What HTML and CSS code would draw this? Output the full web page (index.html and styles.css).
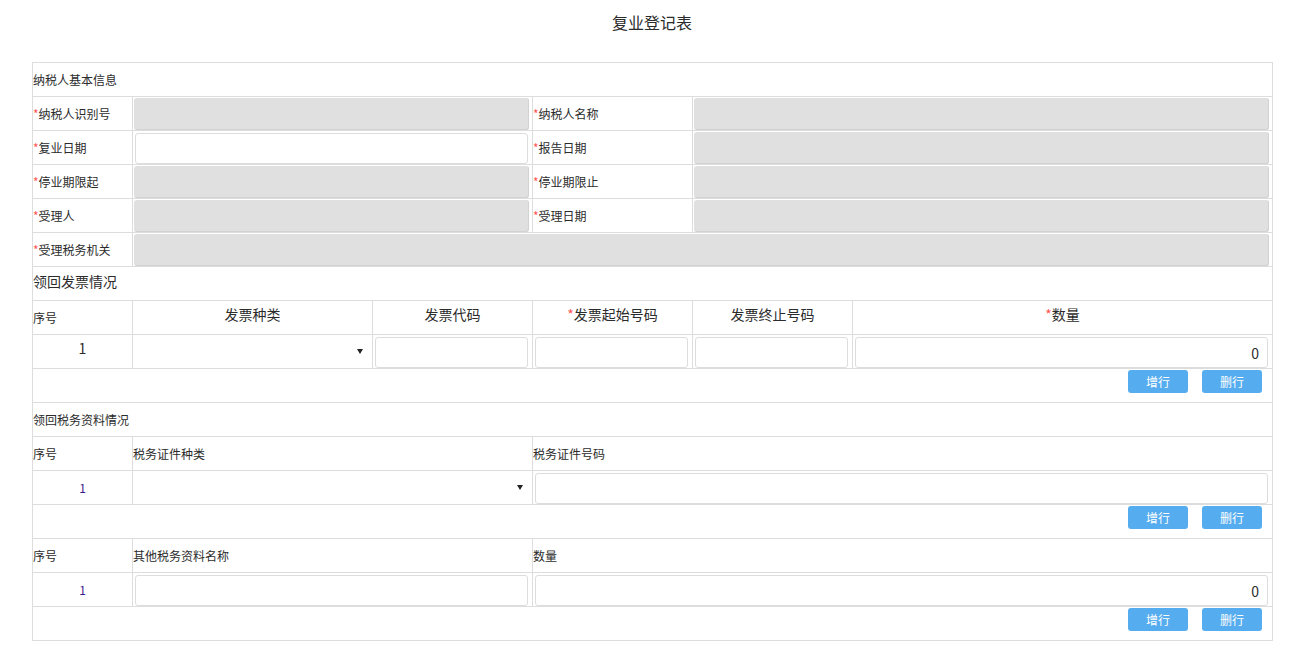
FILE: index.html
```html
<!DOCTYPE html>
<html lang="zh-CN">
<head>
  <meta charset="UTF-8">
  <title>复业登记表</title>
  <link rel="stylesheet" href="styles.css">
</head>
<body>

  <h2 class="title">复业登记表</h2>

  <div class="form">
    <!-- 纳税人基本信息 -->
    <table class="grid">
      <colgroup><col style="width:100px"><col style="width:400px"><col style="width:160px"><col></colgroup>
      <tr><td colspan="4" class="section">纳税人基本信息</td></tr>
      <tr>
        <td><span class="req">*</span>纳税人识别号</td>
        <td><input class="ro" disabled></td>
        <td><span class="req">*</span>纳税人名称</td>
        <td><input class="ro" disabled></td>
      </tr>
      <tr>
        <td><span class="req">*</span>复业日期</td>
        <td><input class="txt"></td>
        <td><span class="req">*</span>报告日期</td>
        <td><input class="ro" disabled></td>
      </tr>
      <tr>
        <td><span class="req">*</span>停业期限起</td>
        <td><input class="ro" disabled></td>
        <td><span class="req">*</span>停业期限止</td>
        <td><input class="ro" disabled></td>
      </tr>
      <tr>
        <td><span class="req">*</span>受理人</td>
        <td><input class="ro" disabled></td>
        <td><span class="req">*</span>受理日期</td>
        <td><input class="ro" disabled></td>
      </tr>
      <tr>
        <td><span class="req">*</span>受理税务机关</td>
        <td colspan="3"><input class="ro" disabled></td>
      </tr>
    </table>

    <!-- 领回发票情况 -->
    <table class="grid">
      <colgroup><col style="width:100px"><col style="width:240px"><col style="width:160px"><col style="width:160px"><col style="width:160px"><col></colgroup>
      <tr><td colspan="6" class="section big">领回发票情况</td></tr>
      <tr class="head">
        <td class="seq-head">序号</td>
        <td>发票种类</td>
        <td>发票代码</td>
        <td><span class="req">*</span>发票起始号码</td>
        <td>发票终止号码</td>
        <td><span class="req">*</span>数量</td>
      </tr>
      <tr>
        <td class="seq big">1</td>
        <td><div class="select"><span class="arrow"></span></div></td>
        <td><input class="txt"></td>
        <td><input class="txt"></td>
        <td><input class="txt"></td>
        <td><input class="txt num" value="0"></td>
      </tr>
      <tr>
        <td colspan="6" class="actions">
          <button class="btn">增行</button><button class="btn">删行</button>
        </td>
      </tr>
    </table>

    <!-- 领回税务资料情况 -->
    <table class="grid">
      <colgroup><col style="width:100px"><col style="width:400px"><col></colgroup>
      <tr><td colspan="3" class="section">领回税务资料情况</td></tr>
      <tr>
        <td>序号</td>
        <td>税务证件种类</td>
        <td>税务证件号码</td>
      </tr>
      <tr>
        <td class="seq purple">1</td>
        <td><div class="select"><span class="arrow"></span></div></td>
        <td><input class="txt"></td>
      </tr>
      <tr>
        <td colspan="3" class="actions">
          <button class="btn">增行</button><button class="btn">删行</button>
        </td>
      </tr>
      <tr>
        <td>序号</td>
        <td>其他税务资料名称</td>
        <td>数量</td>
      </tr>
      <tr>
        <td class="seq purple">1</td>
        <td><input class="txt"></td>
        <td><input class="txt num" value="0"></td>
      </tr>
      <tr>
        <td colspan="3" class="actions">
          <button class="btn">增行</button><button class="btn">删行</button>
        </td>
      </tr>
    </table>
  </div>

</body>
</html>
```

FILE: styles.css
```css
body {
  margin: 0;
  font-family: "Noto Sans CJK SC", "Liberation Sans", sans-serif;
  font-size: 12px;
  color: #2b2b2b;
  background: #fff;
}
.title {
  margin: 0;
  padding-top: 12px;
  height: 62px;
  box-sizing: border-box;
  text-align: center;
  font-size: 16px;
  font-weight: normal;
  line-height: 20px;
}
.form {
  width: 1241px;
  margin-left: 32px;
}
.grid {
  width: 1241px;
  border-collapse: collapse;
  table-layout: fixed;
}
.grid + .grid {
  margin-top: -1px;
}
.grid td {
  border: 1px solid #ddd;
  height: 33px;
  padding: 0;
  line-height: 16px;
  vertical-align: middle;
  white-space: nowrap;
}
.big {
  font-size: 14px;
}
.grid td.section.big {
  padding-bottom: 6px;
  height: 27px;
}
.req {
  color: #f55;
}
.head td {
  text-align: center;
  font-size: 14px;
  padding-bottom: 7px;
  height: 26px;
}
.head td.seq-head {
  text-align: left;
  font-size: 12px;
  padding: 0;
  height: 33px;
}
.seq {
  text-align: center;
}
.grid td.seq.big {
  vertical-align: top;
  padding-top: 5px;
  height: 28px;
}
.purple {
  color: #3d1a8c;
}
.ro {
  display: block;
  box-sizing: border-box;
  width: calc(100% - 4px);
  height: 32px;
  margin: 1px 3px 0 1px;
  border: none;
  border-radius: 3px;
  background: #e0e0e0;
  box-shadow: inset -1px -1px 0 #d2d2d2;
}
.txt {
  display: block;
  box-sizing: border-box;
  width: calc(100% - 6px);
  height: 31px;
  margin: 2px 4px 0 2px;
  border: 1px solid #ddd;
  border-radius: 3px;
  background: #fff;
  font-family: inherit;
  font-size: 14px;
  color: #2b2b2b;
  outline: none;
}
.num {
  text-align: right;
  padding-right: 8px;
}
.select {
  position: relative;
  height: 33px;
}
.arrow {
  position: absolute;
  right: 9px;
  top: 14px;
  width: 0;
  height: 0;
  border-left: 3px solid transparent;
  border-right: 3px solid transparent;
  border-top: 5px solid #222;
}
.grid td.actions {
  text-align: right;
  vertical-align: top;
  padding: 1px 10px 0 0;
  height: 32px;
}
.btn {
  width: 60px;
  height: 23px;
  margin-left: 14px;
  padding: 0;
  border: none;
  border-radius: 3px;
  background: #55acee;
  color: #fff;
  font-family: inherit;
  font-size: 12px;
  line-height: 23px;
  vertical-align: top;
  cursor: pointer;
}
```
